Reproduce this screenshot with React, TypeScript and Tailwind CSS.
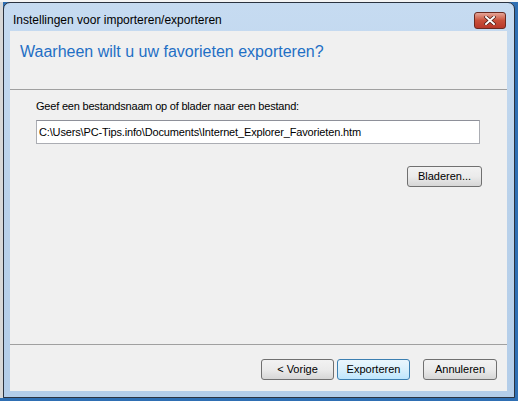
export default function App() {
  const ui = { fontFamily: '"Liberation Sans", Arial, sans-serif' };
  return (
    <div className="w-[518px] h-[401px] bg-[#2f6fb3] overflow-hidden" style={ui}>
      <div className="h-[2px] bg-[#f4f4f4]" />
      <div className="flex">
        <div className="w-[3px] h-[396px] bg-[#d8d8d8]" />
        {/* window */}
        <div className="w-[512px] h-[396px] border border-[#2b3340] rounded-t-[7px] bg-gradient-to-b from-[#c6dbf1] via-[#b9d1ea] to-[#b3cde9] flex flex-col pl-[6px] pr-[7px] pb-[6px]">
          {/* title bar */}
          <div className="h-[28px] flex items-start justify-between pl-[3px] pr-[1px]">
            <span className="text-[12px] text-black mt-[10px] leading-[14px]">Instellingen voor importeren/exporteren</span>
            <div className="w-[32px] h-[17px] mt-[9px] rounded-[3px] border border-[#6b2a20] bg-gradient-to-b from-[#e4a598] via-[#c9503a] to-[#b8382a] flex items-center justify-center">
              <svg width="12" height="9" viewBox="0 0 12 9">
                <path d="M2 1 L10 8 M10 1 L2 8" stroke="#4a1a14" strokeWidth="3.4" strokeLinecap="square" />
                <path d="M2 1 L10 8 M10 1 L2 8" stroke="#ffffff" strokeWidth="2" strokeLinecap="square" />
              </svg>
            </div>
          </div>
          {/* client area */}
          <div className="flex-1 bg-[#f0f0f0] flex flex-col">
            <div className="h-[59px] border-b border-[#a0a0a0] pl-[10px] pt-[9px]">
              <span className="text-[16px] text-[#1f6fc5]">Waarheen wilt u uw favorieten exporteren?</span>
            </div>
            <div className="flex-1 flex flex-col pl-[26px] pr-[25px] pt-[10px]">
              <div className="text-[11px] leading-[13px] tracking-[-0.2px] text-black">Geef een bestandsnaam op of blader naar een bestand:</div>
              <div className="mt-[7px] w-[444px] h-[24px] bg-white border border-[#abadb3] border-t-[#8e9099] flex items-center pl-[2px] text-[11px] tracking-[-0.15px] text-black">
                C:\Users\PC-Tips.info\Documents\Internet_Explorer_Favorieten.htm
              </div>
              <div className="flex justify-end mt-[22px]">
                <button className="w-[75px] h-[21px] rounded-[3px] border border-[#707070] bg-gradient-to-b from-[#f2f2f2] via-[#ebebeb] to-[#d6d6d6] text-[11px] text-black">
                  Bladeren...
                </button>
              </div>
            </div>
            <div className="h-[47px] border-t border-[#a0a0a0] flex justify-end items-start pt-[14px] pr-[10px]">
              <button className="w-[73px] h-[21px] rounded-[3px] border border-[#707070] bg-gradient-to-b from-[#f2f2f2] via-[#ebebeb] to-[#d6d6d6] text-[11px] text-black">
                &lt; Vorige
              </button>
              <button className="ml-[3px] w-[73px] h-[21px] rounded-[3px] border border-[#3c7fb1] bg-gradient-to-b from-[#eaf6fd] via-[#d9f0fc] to-[#bee6fd] text-[11px] text-black">
                Exporteren
              </button>
              <button className="ml-[13px] w-[74px] h-[21px] rounded-[3px] border border-[#707070] bg-gradient-to-b from-[#f2f2f2] via-[#ebebeb] to-[#d6d6d6] text-[11px] text-black">
                Annuleren
              </button>
            </div>
          </div>
        </div>
        <div className="w-[3px] h-[396px] bg-[#2f6fb3]" />
      </div>
    </div>
  );
}
